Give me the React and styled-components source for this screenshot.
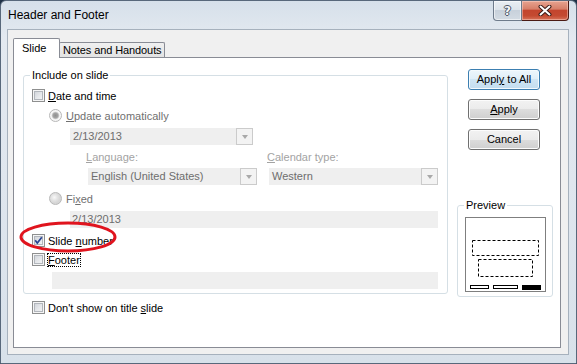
import React from 'react';
import styled, { createGlobalStyle } from 'styled-components';

const GlobalStyle = createGlobalStyle`
  html, body { margin: 0; padding: 0; background: #1f3247; }
  body { font-family: "Liberation Sans", Arial, sans-serif; font-size: 11px; color: #000; }
  #root { width: 577px; height: 364px; }
  * { box-sizing: border-box; }
`;

const Window = styled.div`
  width: 577px;
  height: 364px;
  border: 1px solid #58687b;
  border-radius: 6px 6px 0 0;
  background: linear-gradient(180deg, #d6e0ea 0%, #e3e9f0 10%, #dfe6ee 50%, #d8e1ea 100%);
  display: flex;
  flex-direction: column;
  overflow: hidden;
`;

const TitleBar = styled.div`
  height: 28px;
  flex: none;
  display: flex;
  align-items: flex-start;
  padding-left: 7px;
`;

const Title = styled.div`
  flex: 1;
  padding-top: 7px;
  line-height: 15px;
  font-size: 12px;
  color: #000;
`;

const CaptionButtons = styled.div`
  display: flex;
  margin-right: 7px;
`;

const HelpButton = styled.div`
  width: 29px;
  height: 20px;
  border: 1px solid #6e7b8b;
  border-top: none;
  border-radius: 0 0 0 4px;
  background: linear-gradient(180deg, #e9eef3 0%, #dde4eb 45%, #c8d1db 50%, #d3dbe3 100%);
  box-shadow: inset 0 0 0 1px rgba(255, 255, 255, 0.55);
  display: flex;
  align-items: center;
  justify-content: center;
  font-family: "DejaVu Sans", sans-serif;
  font-weight: bold;
  font-size: 12px;
  color: #f4f6f8;
  text-shadow: 1px 0 #4b5666, -1px 0 #4b5666, 0 1px #4b5666, 0 -1px #4b5666;
`;

const CloseButton = styled.div`
  width: 47px;
  height: 20px;
  border: 1px solid #4a1a14;
  border-top: none;
  border-left: none;
  border-radius: 0 0 4px 0;
  background: linear-gradient(180deg, #e7a390 0%, #d77f69 42%, #c3452e 50%, #c44a31 78%, #d8735a 100%);
  box-shadow: inset 0 0 0 1px rgba(255, 220, 210, 0.45);
  display: flex;
  align-items: center;
  justify-content: center;
`;

const Client = styled.div`
  flex: 1;
  margin: 0 7px 8px 6px;
  border: 1px solid #a6b1bd;
  background: #f0f0f0;
  padding: 8px 7px 6px 5px;
  display: flex;
  flex-direction: column;
`;

const TabRow = styled.div`
  display: flex;
  align-items: flex-end;
  height: 20px;
  margin-bottom: -1px;
  flex: none;
`;

const Tab = styled.div`
  position: relative;
  border: 1px solid #898c95;
  border-bottom: none;
  border-radius: 2px 2px 0 0;
  white-space: nowrap;
  ${p => p.$active ? `
    z-index: 1;
    height: 20px;
    width: 47px;
    padding-left: 8px;
    line-height: 18px;
    background: #fff;
  ` : `
    height: 15px;
    margin-left: -1px;
    margin-bottom: 1px;
    padding: 0 2px 0 3px;
    line-height: 14px;
    letter-spacing: -0.1px;
    background: linear-gradient(180deg, #f0f0f0, #e3e3e3);
  `}
`;

const Panel = styled.div`
  position: relative;
  flex: 1;
  border: 1px solid #898c95;
  background: #fff;
  display: flex;
  padding: 11px 7px 0 9px;
`;

const LeftCol = styled.div`
  width: 425px;
  display: flex;
  flex-direction: column;
`;

const RightCol = styled.div`
  width: 96px;
  margin-left: 9px;
  display: flex;
  flex-direction: column;
`;

const GroupBox = styled.fieldset`
  margin: 0;
  min-width: 0;
  border: 1px solid #d5dfe5;
  border-radius: 3px;
  padding: ${p => p.$pad};
`;

const Legend = styled.legend`
  padding: 0 2px;
  margin-left: ${p => p.$ml}px;
  line-height: 13px;
  font-size: 11px;
  color: #000;
`;

const Column = styled.div`
  display: flex;
  flex-direction: column;
`;

const Row = styled.div`
  display: flex;
  align-items: center;
  height: 13px;
  margin-top: ${p => p.$mt || 0}px;
  margin-left: ${p => p.$indent || 0}px;
`;

const Checkbox = styled.span`
  width: 13px;
  height: 13px;
  flex: none;
  border: 1px solid #8e8f8f;
  background: linear-gradient(135deg, #c9cdd3 0%, #e6e8eb 55%, #f7f7f7 100%);
  box-shadow: inset 0 0 0 1px #f5f5f5, inset 0 0 0 2px #b2b6bc;
  display: flex;
  align-items: center;
  justify-content: center;
`;

const Radio = styled.span`
  width: 13px;
  height: 13px;
  flex: none;
  border-radius: 50%;
  border: 1px solid #b8b8b8;
  background: ${p => p.$checked
    ? 'radial-gradient(circle, #8f8f8f 0, #a5a5a5 2.6px, #cfcfcf 3.4px, #f6f6f6 4.2px)'
    : 'radial-gradient(circle at 40% 40%, #f8f8f8 0, #e4e4e4 3px, #d6d6d6 5.5px)'};
`;

const Label = styled.span`
  margin-left: ${p => p.$gap}px;
  border: 1px dotted ${p => (p.$focus ? '#000' : 'transparent')};
  line-height: 12px;
  white-space: nowrap;
  color: ${p => (p.$disabled ? '#707070' : '#000')};
`;

const Combo = styled.div`
  display: flex;
  height: 17px;
  width: ${p => (p.$width ? `${p.$width}px` : 'auto')};
  margin-top: ${p => p.$mt || 0}px;
  margin-left: ${p => p.$indent || 0}px;
  background: #efefef;
`;

const ComboText = styled.span`
  flex: 1;
  padding-left: ${p => p.$pl || 3}px;
  line-height: 17px;
  color: #6d6d6d;
  white-space: nowrap;
`;

const DropButton = styled.span`
  width: 17px;
  height: 17px;
  flex: none;
  border: 1px solid #cbcbcb;
  background: #f3f3f3;
  display: flex;
  align-items: center;
  justify-content: center;
  &::after {
    content: "";
    width: 0;
    height: 0;
    border-left: 3.5px solid transparent;
    border-right: 3.5px solid transparent;
    border-top: 4px solid #a9a9a9;
    margin-top: 1px;
  }
`;

const PairGrid = styled.div`
  display: grid;
  grid-template-columns: 169px 169px;
  column-gap: 12px;
  margin-left: 56px;
  margin-top: ${p => p.$mt || 0}px;
`;

const FieldLabel = styled.span`
  height: 13px;
  line-height: 13px;
  margin-left: -2px;
  color: #a3a3a3;
  white-space: nowrap;
`;

const ButtonStack = styled.div`
  display: flex;
  flex-direction: column;
  gap: 9px;
  padding-left: 11px;
`;

const Button = styled.button`
  width: 72px;
  height: 21px;
  padding: 0;
  margin: 0;
  font-family: inherit;
  font-size: 11px;
  color: #000;
  border-radius: 3px;
  border: 1px solid ${p => (p.$primary ? '#3c7fb1' : '#707070')};
  background: ${p => p.$primary
    ? 'linear-gradient(180deg, #edf6fc 0%, #dfeef8 50%, #cfe5f4 50%, #c3ddef 100%)'
    : 'linear-gradient(180deg, #f2f2f2 0%, #ebebeb 50%, #dddddd 50%, #cfcfcf 100%)'};
  box-shadow: inset 0 0 0 1px ${p => (p.$primary ? '#f4fafe' : '#fcfcfc')};
  line-height: 19px;
`;

const PreviewBox = styled.fieldset`
  margin: 49px 0 0 0;
  min-width: 0;
  width: 96px;
  border: 1px solid #d5dfe5;
  border-radius: 3px;
  padding: 5px 6px 4px 7px;
`;

const Annotation = styled.svg`
  position: absolute;
  left: 4px;
  top: 161px;
  pointer-events: none;
`;

const CheckItem = ({ checked, children, focus, mt, indent, gap = 2 }) => (
  <Row $mt={mt} $indent={indent}>
    <Checkbox>
      {checked && (
        <svg width="9" height="9" viewBox="0 0 9 9">
          <polyline points="1.2,4.3 3.3,7 7.8,1.2" fill="none" stroke="#2a4592" strokeWidth="1.7" />
        </svg>
      )}
    </Checkbox>
    <Label $gap={gap} $focus={focus}>{children}</Label>
  </Row>
);

const RadioItem = ({ checked, children, mt }) => (
  <Row $mt={mt} $indent={17}>
    <Radio $checked={checked} />
    <Label $gap={3} $disabled>{children}</Label>
  </Row>
);

export default function App() {
  return (
    <>
      <GlobalStyle />
      <Window>
        <TitleBar>
          <Title>Header and Footer</Title>
          <CaptionButtons>
            <HelpButton>?</HelpButton>
            <CloseButton>
              <svg width="14" height="11" viewBox="0 0 14 11">
                <path d="M2.5 1.5 L11.5 9.5 M11.5 1.5 L2.5 9.5" stroke="#3b1a16" strokeWidth="4" strokeLinecap="round" />
                <path d="M2.5 1.5 L11.5 9.5 M11.5 1.5 L2.5 9.5" stroke="#ffffff" strokeWidth="2" strokeLinecap="round" />
              </svg>
            </CloseButton>
          </CaptionButtons>
        </TitleBar>
        <Client>
          <TabRow>
            <Tab $active>Slide</Tab>
            <Tab>Notes and Handouts</Tab>
          </TabRow>
          <Panel>
            <LeftCol>
              <GroupBox $pad="7px 9px 4px 8px">
                <Legend $ml={-2}>Include on slide</Legend>
                <Column>
                  <CheckItem><u>D</u>ate and time</CheckItem>
                  <RadioItem checked mt={7}><u>U</u>pdate automatically</RadioItem>
                  <Combo $width={183} $indent={38} $mt={6}>
                    <ComboText>2/13/2013</ComboText>
                    <DropButton />
                  </Combo>
                  <PairGrid $mt={6}>
                    <FieldLabel><u>L</u>anguage:</FieldLabel>
                    <FieldLabel><u>C</u>alendar type:</FieldLabel>
                  </PairGrid>
                  <PairGrid $mt={4}>
                    <Combo>
                      <ComboText>English (United States)</ComboText>
                      <DropButton />
                    </Combo>
                    <Combo>
                      <ComboText>Western</ComboText>
                      <DropButton />
                    </Combo>
                  </PairGrid>
                  <RadioItem mt={7}>Fi<u>x</u>ed</RadioItem>
                  <Combo $indent={38} $mt={6}>
                    <ComboText $pl={2}>2/13/2013</ComboText>
                  </Combo>
                  <CheckItem checked mt={6}>Slide <u>n</u>umber</CheckItem>
                  <CheckItem focus mt={6}><u>F</u>ooter</CheckItem>
                  <Combo $indent={20} $mt={6} />
                </Column>
              </GroupBox>
              <CheckItem mt={7} indent={9}>Don't show on title <u>s</u>lide</CheckItem>
            </LeftCol>
            <RightCol>
              <ButtonStack>
                <Button $primary>Appl<u>y</u> to All</Button>
                <Button><u>A</u>pply</Button>
                <Button>Cancel</Button>
              </ButtonStack>
              <PreviewBox>
                <Legend $ml={-1}>Preview</Legend>
                <svg width="81" height="75" viewBox="0 0 81 75" style={{ display: 'block' }}>
                  <rect x="0.5" y="0.5" width="80" height="74" fill="#fff" stroke="#7f7f7f" />
                  <rect x="7.5" y="23.5" width="66" height="15" fill="none" stroke="#000" strokeDasharray="3 2" />
                  <rect x="13.5" y="42.5" width="54" height="17" fill="none" stroke="#000" strokeDasharray="3 2" />
                  <rect x="5.5" y="68.5" width="18" height="3" fill="#fff" stroke="#000" />
                  <rect x="28.5" y="68.5" width="24" height="3" fill="#fff" stroke="#000" />
                  <rect x="57" y="68" width="19" height="5" fill="#000" />
                </svg>
              </PreviewBox>
            </RightCol>
            <Annotation width="100" height="36" viewBox="0 0 100 36">
              <ellipse cx="50" cy="18" rx="47" ry="14" fill="none" stroke="#e0141e" strokeWidth="3" />
            </Annotation>
          </Panel>
        </Client>
      </Window>
    </>
  );
}
